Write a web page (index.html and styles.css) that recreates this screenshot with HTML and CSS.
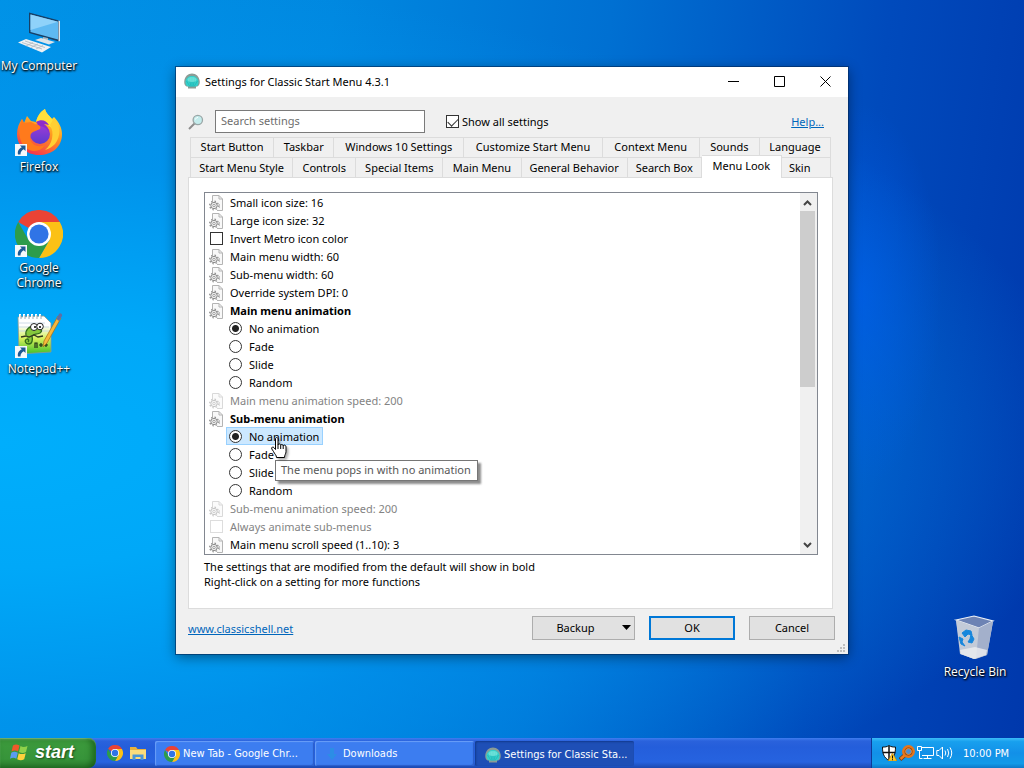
FILE: index.html
```
<!DOCTYPE html>
<html lang="en">

<head>
    <meta charset="UTF-8">
    <title>Settings for Classic Start Menu 4.3.1</title>
    <link rel="stylesheet" href="styles.css">
</head>

<body>
    <!-- shared icons -->
    <svg class="defs" width="0" height="0">
        <symbol id="gearPage" viewBox="0 0 14 16">
            <path d="M3.500 6V.5H10L13.500 4v11.500H8" fill="#f8f8f8" stroke="#b4b4b4" />
            <path d="M10 .5V4h3.500" fill="none" stroke="#b4b4b4" />
            <circle cx="5" cy="10.500" r="3.200" fill="#eee" stroke="#8c8c8c" />
            <circle cx="5" cy="10.500" r="4.300" fill="none" stroke="#8c8c8c" stroke-width="1.300" stroke-dasharray="1.500 1.877" />
            <circle cx="5" cy="10.500" r="1.200" fill="#fff" stroke="#8c8c8c" stroke-width=".8" />
            <path d="M10.500 9v4" stroke="#c4c4c4" />
        </symbol>
        <symbol id="shell" viewBox="0 0 16 16">
            <path d="M4 15.500h8v-2c3 .3 4-2.500 3.700-5.500C15.300 3.500 12 .5 8 .5S.7 3.500.3 8C0 11 1 13.800 4 13.500z" fill="#8b9c96" />
            <path d="M4.500 13.500h7c2.500-.5 3.300-2.700 3-5.300C14 5 11.500 3 8 3S2 5 1.500 8.200c-.3 2.600.5 4.800 3 5.300z" fill="#34cfca" />
            <path d="M8 4v9.500M5 5l2 8.500M11 5L9 13.500M2.500 8L6 13.500M13.500 8L10 13.500" stroke="#1fb0b0" stroke-width=".6" />
            <ellipse cx="8" cy="6.500" rx="4.500" ry="2.500" fill="#8ceee2" opacity=".6" />
        </symbol>
        <symbol id="chrome" viewBox="0 0 48 48">
            <path d="M24 24L3.200 12A24 24 0 0 1 44.800 12z" fill="#ea4335" />
            <path d="M24 24V12h20.800A24 24 0 0 1 24 48L34.400 30z" fill="#fbc116" />
            <path d="M24 24l10.400 6L24 48A24 24 0 0 1 3.200 12L13.600 30z" fill="#2d9c4b" />
            <circle cx="24" cy="24" r="12" fill="#fff" />
            <circle cx="24" cy="24" r="9.600" fill="#3074e6" />
        </symbol>
        <symbol id="shortcut" viewBox="0 0 12 12">
            <path d="M0 0h12v12H0z" fill="#f6f8fb" />
            <path d="M5 1.500h5.500V7L8.700 5.200C6.500 6.500 5.500 8 5.500 10.500H3C2.200 7 4 4.500 6.800 3.300z" fill="#1f5a94" />
        </symbol>
    </svg>

    <div id="desktop">
        <div class="icons left">
            <a href="#" class="icon">
                <svg width="48" height="48" viewBox="0 0 48 48">
                    <path d="M14 4.500L44 12.500V33.500L14 25z" fill="#173f66" />
                    <path d="M15.500 6.500L43 13.800V31.500L15.500 24z" fill="#5eb9f2" />
                    <path d="M15.500 6.500L43 13.800L15.500 22z" fill="#8fd2fa" />
                    <path d="M43.500 12.500l1.500.5v20l-1.500.5z" fill="#dfe7ec" />
                    <path d="M28 29v4l5 1.500V30z" fill="#a9b6bf" />
                    <path d="M20 32l6-2 14 4-6 2.500z" fill="#dde4e8" />
                    <path d="M3 34.500l8-3.500 25 8-9 5.500z" fill="#eef1f4" />
                    <path d="M7 34.500l20 6.500M10 33l20 6.500M11 38l7-3.500M16 39.500l7-3.500M21 41l7-3.500" stroke="#adb7bf" stroke-width=".8" />
                </svg>
                <span>My Computer</span>
            </a>
            <a href="#" class="icon">
                <svg width="48" height="48" viewBox="0 0 48 48">
                    <defs>
                        <linearGradient id="fox" x1=".8" y1="0" x2=".3" y2="1">
                            <stop offset="0" stop-color="#fff04a" />
                            <stop offset=".45" stop-color="#ff9a1f" />
                            <stop offset="1" stop-color="#f5304f" />
                        </linearGradient>
                        <linearGradient id="globe" x1="0" y1="0" x2="0" y2="1">
                            <stop offset="0" stop-color="#a13bd6" />
                            <stop offset="1" stop-color="#5a3bd0" />
                        </linearGradient>
                    </defs>
                    <path d="M30 0c1 5 5 7 7 10l2-2c5 5 8 11 8 17 0 13-10 21-23 21S2 37 2 25c0-6 2-11 5-15l2 4 3-7 4 5 5 1c1-5 4-10 9-13z" fill="url(#fox)" />
                    <path d="M30 0c1 5 5 7 7 10 5 6 7 12 5 20-2-9-7-14-13-15-3-1-6-2-8-2 1-5 4-10 9-13z" fill="#ffe03c" />
                    <circle cx="25" cy="25" r="10" fill="url(#globe)" />
                    <path d="M21 13c5-3 10-2 13 3l-5-1c3 2 5 5 5 9-2-5-6-7-10-7z" fill="#8d2ccb" />
                    <path d="M7 10l2 4 7-1 6 3c3 0 4 2 3 4l-7 3c-2 1-3 3-3 6 1 7 8 10 15 7-4 7-14 8-20 2C3 32 3 18 7 10z" fill="#ff7a1c" />
                    <path d="M39 9c7 8 7 18 1 26-3 3-6 5-10 6 7-5 10-17 5-25z" fill="#ffcf33" />
                    <use href="#shortcut" x="0" y="35" width="12" height="12" />
                </svg>
                <span>Firefox</span>
            </a>
            <a href="#" class="icon">
                <svg width="48" height="48" viewBox="0 0 48 48">
                    <use href="#chrome" width="48" height="48" />
                    <use href="#shortcut" x="0" y="35" width="12" height="12" />
                </svg>
                <span>Google Chrome</span>
            </a>
            <a href="#" class="icon">
                <svg width="48" height="48" viewBox="0 0 48 48">
                    <defs>
                        <linearGradient id="note" x1="0" y1="0" x2="0" y2="1">
                            <stop offset=".25" stop-color="#fff" />
                            <stop offset=".6" stop-color="#d4f05a" />
                            <stop offset="1" stop-color="#3fbf2a" />
                        </linearGradient>
                    </defs>
                    <path d="M3 6l26-1 7 7v29L4 43z" fill="url(#note)" stroke="#8f9a8f" stroke-width=".8" />
                    <path d="M4 12h26M4 16h30M4 20h31" stroke="#c3d3e3" stroke-width=".8" />
                    <path d="M5 8V3M9 8V3M13 8V3M17 8V3M21 8V3M25 8V3" stroke="#fff" stroke-width="2" />
                    <path d="M6 8V4M10 8V4M14 8V4M18 8V4M22 8V4M26 8V4" stroke="#8a97a5" stroke-width=".8" />
                    <path d="M11 24c-1-5 3-9 9-9l3 1c3 1 5 4 2 6-4 2-6 0-8 3 1 4 0 8-3 8-4 0-5-4-2-5 2 0 2 2 1 3" fill="#86c83c" stroke="#2f6a1b" stroke-width="1.300" />
                    <circle cx="19" cy="16" r="3.500" fill="#fff" stroke="#222" />
                    <circle cx="25" cy="15.500" r="3.300" fill="#fff" stroke="#222" />
                    <circle cx="20" cy="16" r="1" />
                    <circle cx="25" cy="16" r="1" />
                    <path d="M6 26l5-1 3 1 5-2 4 2 5-1" fill="none" stroke="#33391f" stroke-width="1.300" />
                    <path d="M20 37v-5h2v5M24 34h4M26 32v4M29 34h4M31 32v4" fill="none" stroke="#1e2c14" stroke-width="1.200" />
                    <path d="M43 5l3 2-14 25-4 4 1-6z" fill="#f6b83c" stroke="#a56a17" stroke-width=".7" />
                    <path d="M41.500 8L44 3c1-2 4 0 3 2l-3 5z" fill="#5d6ea6" />
                    <use href="#shortcut" x="0" y="35" width="12" height="12" />
                </svg>
                <span>Notepad++</span>
            </a>
        </div>

        <div class="window">
            <div class="titlebar">
                <svg width="16" height="16"><use href="#shell" /></svg>
                <span class="title">Settings for Classic Start Menu 4.3.1</span>
                <button type="button" aria-label="Minimize"><svg width="11" height="11"><path d="M0 5.500h11" stroke="#000" /></svg></button>
                <button type="button" aria-label="Maximize"><svg width="11" height="11"><path d="M.5.5h10v10H.5z" fill="none" stroke="#000" /></svg></button>
                <button type="button" aria-label="Close"><svg width="11" height="11"><path d="M.5.5l10 10M10.500.5l-10 10" stroke="#000" /></svg></button>
            </div>

            <div class="content">
                <div class="search">
                    <svg width="16" height="16" viewBox="0 0 16 16">
                        <path d="M1 15l5.500-5.500" stroke="#8d8d8d" stroke-width="2" />
                        <circle cx="9.800" cy="6" r="4.700" fill="#c4ecec" stroke="#9aa6a6" stroke-width="1.300" />
                        <path d="M7.500 5.500c.3-1.300 1.200-2 2.500-2" fill="none" stroke="#fff" />
                    </svg>
                    <input type="text" class="searchBox" placeholder="Search settings" aria-label="Search settings">
                    <label class="showAll"><input type="checkbox" checked>Show all settings</label>
                    <a href="#" class="link help">Help...</a>
                </div>

                <div class="tabs" role="tablist">
                    <div class="tabRow first">
                        <button type="button" class="tab" role="tab">Start Button</button>
                        <button type="button" class="tab" role="tab">Taskbar</button>
                        <button type="button" class="tab" role="tab">Windows 10 Settings</button>
                        <button type="button" class="tab" role="tab">Customize Start Menu</button>
                        <button type="button" class="tab" role="tab">Context Menu</button>
                        <button type="button" class="tab" role="tab">Sounds</button>
                        <button type="button" class="tab" role="tab">Language</button>
                    </div>
                    <div class="tabRow second">
                        <button type="button" class="tab" role="tab">Start Menu Style</button>
                        <button type="button" class="tab" role="tab">Controls</button>
                        <button type="button" class="tab" role="tab">Special Items</button>
                        <button type="button" class="tab" role="tab">Main Menu</button>
                        <button type="button" class="tab" role="tab">General Behavior</button>
                        <button type="button" class="tab" role="tab">Search Box</button>
                        <button type="button" class="tab active" role="tab" aria-selected="true">Menu Look</button>
                        <button type="button" class="tab last" role="tab">Skin</button>
                    </div>
                </div>

                <div class="panel">
                    <div class="listBox">
                        <ul class="list">
                            <li><svg><use href="#gearPage" /></svg>Small icon size: 16</li>
                            <li><svg><use href="#gearPage" /></svg>Large icon size: 32</li>
                            <li><label><input type="checkbox">Invert Metro icon color</label></li>
                            <li><svg><use href="#gearPage" /></svg>Main menu width: 60</li>
                            <li><svg><use href="#gearPage" /></svg>Sub-menu width: 60</li>
                            <li><svg><use href="#gearPage" /></svg>Override system DPI: 0</li>
                            <li class="bold"><svg><use href="#gearPage" /></svg>Main menu animation</li>
                            <li class="sub"><label><input type="radio" name="mainAnim" checked>No animation</label></li>
                            <li class="sub"><label><input type="radio" name="mainAnim">Fade</label></li>
                            <li class="sub"><label><input type="radio" name="mainAnim">Slide</label></li>
                            <li class="sub"><label><input type="radio" name="mainAnim">Random</label></li>
                            <li class="off"><svg><use href="#gearPage" /></svg>Main menu animation speed: 200</li>
                            <li class="bold"><svg><use href="#gearPage" /></svg>Sub-menu animation</li>
                            <li class="sub hover">
                                <label><input type="radio" name="subAnim" checked>No animation</label>
                                <svg class="cursor" viewBox="0 0 16 22">
                                    <path d="M4.500 12.500V2c0-2 2.500-2 2.500 0v6c0-1.500 2.700-1.500 2.700.5 0-1.500 2.500-1.300 2.500.5 0-1.500 2.800-1.200 2.800.8v5c0 2-1.500 3-1.500 5.700H5.500c0-2.500-2-3.500-3-6L.8 12c-.8-2 1.400-2.500 2.200-1.300z" fill="#fff" stroke="#000" />
                                    <path d="M7 8v4M9.700 8.500V12M12.200 9v3" stroke="#000" />
                                </svg>
                                <span class="tooltip" role="tooltip">The menu pops in with no animation</span>
                            </li>
                            <li class="sub"><label><input type="radio" name="subAnim">Fade</label></li>
                            <li class="sub"><label><input type="radio" name="subAnim">Slide</label></li>
                            <li class="sub"><label><input type="radio" name="subAnim">Random</label></li>
                            <li class="off"><svg><use href="#gearPage" /></svg>Sub-menu animation speed: 200</li>
                            <li class="off"><label><input type="checkbox" disabled>Always animate sub-menus</label></li>
                            <li><svg><use href="#gearPage" /></svg>Main menu scroll speed (1..10): 3</li>
                        </ul>
                        <div class="scrollbar">
                            <button type="button" aria-label="Scroll up"><svg width="9" height="6"><path d="M1 5l3.500-3.500L8 5" fill="none" stroke="#444" stroke-width="2" /></svg></button>
                            <div class="track"><div class="thumb"></div></div>
                            <button type="button" aria-label="Scroll down"><svg width="9" height="6"><path d="M1 1l3.500 3.500L8 1" fill="none" stroke="#444" stroke-width="2" /></svg></button>
                        </div>
                    </div>
                    <p class="hint">The settings that are modified from the default will show in bold<br>Right-click on a setting for more functions</p>
                </div>

                <div class="footer">
                    <a href="#" class="link site">www.classicshell.net</a>
                    <button type="button" class="btn backup"><span>Backup</span><svg width="9" height="5"><path d="M0 0h9L4.500 5z" /></svg></button>
                    <button type="button" class="btn ok">OK</button>
                    <button type="button" class="btn">Cancel</button>
                </div>
            </div>
            <svg class="grip" width="8" height="8"><path d="M6 0h2v2H6zM3 3h2v2H3zM6 3h2v2H6zM0 6h2v2H0zM3 6h2v2H3zM6 6h2v2H6z" fill="#bfbfbf" /></svg>
        </div>

        <div class="icons right">
            <a href="#" class="icon">
                <svg width="48" height="48" viewBox="0 0 48 48">
                    <path d="M5 6l37 2-6 33-13 4-13-5z" fill="#b9c6dc" />
                    <path d="M5 6l18-4 19 5-14 7z" fill="#6d83b4" stroke="#edf2f8" stroke-width="1.200" />
                    <path d="M5 6l23 8-3 31-2-.3-14-4.700z" fill="#c3cbd8" />
                    <path d="M28 14l14-7-6 34-11 4z" fill="#a3b0cb" />
                    <path d="M9 36l15-3 12 3-1 5-12 4-13-5z" fill="#eceef0" opacity=".8" />
                    <path d="M11 19l4-3 5 1 1 4-4-1-3 3zM20 20l3 5-2 4-4-1 2-3zM8 23l4 2-1 3 3 4-4-2z" fill="#1686dc" stroke="#1686dc" />
                </svg>
                <span>Recycle Bin</span>
            </a>
        </div>
    </div>

    <div id="taskbar">
        <button type="button" class="start">
            <svg width="20" height="20" viewBox="0 0 20 20">
                <path d="M3 3.500c2-1.300 4-1.300 6.500 0L8 9.500c-2-1.200-4-1.200-6.500 0z" fill="#f0592a" />
                <path d="M10.500 4c2 1.200 4 1.200 7 0L16 10c-2.500 1.300-4.500 1.200-7 0z" fill="#8fd14a" />
                <path d="M1.300 10.700c2-1.300 4-1.300 6.500 0l-1.500 6c-2-1.200-4-1.200-6.300 0z" fill="#5b9cf0" />
                <path d="M8.700 11.200c2 1.200 4 1.200 7 0l-1.500 6c-2.500 1.300-4.500 1.200-7 0z" fill="#ffd23c" />
            </svg>
            start
        </button>
        <div class="quick">
            <a href="#" aria-label="Google Chrome"><svg width="16" height="16"><use href="#chrome" /></svg></a>
            <a href="#" aria-label="File Explorer">
                <svg width="18" height="16" viewBox="0 0 18 16">
                    <path d="M1 2h6l1.500 2H17v10H1z" fill="#e9b23c" />
                    <path d="M1 5h16v9H1z" fill="#fbdc7c" />
                    <path d="M3.500 15V9.500h11V15h-3v-3h-5v3z" fill="#4a96d8" />
                </svg>
            </a>
        </div>
        <div class="tasks">
            <button type="button" class="task"><svg width="16" height="16"><use href="#chrome" /></svg><span>New Tab - Google Chr...</span></button>
            <button type="button" class="task"><svg width="16" height="16" viewBox="0 0 16 16"><path d="M6 2h4v6h3l-5 6-5-6h3z" fill="#2c8de6" /></svg><span>Downloads</span></button>
            <button type="button" class="task current"><svg width="16" height="16"><use href="#shell" /></svg><span>Settings for Classic Sta...</span></button>
        </div>
        <div class="tray">
            <svg width="16" height="16" viewBox="0 0 16 16">
                <path d="M8 .5c2 1.300 4 1.700 6.500 1.500 0 6-1 10.500-6.500 13.500C2.500 12.500 1.500 8 1.500 2 4 2.200 6 1.800 8 .5z" fill="#fff" stroke="#111" />
                <path d="M8 1v14M1.800 7.500h12.400" stroke="#111" stroke-width="1.500" />
                <path d="M11.500 8l4.500 8H7z" fill="#ffc928" stroke="#b97a00" stroke-width=".6" />
                <path d="M11.500 10.500v3M11.500 14.200v1" stroke="#111" />
            </svg>
            <svg width="16" height="16" viewBox="0 0 16 16">
                <path d="M1 14.500l5-4.500" stroke="#7a3c12" stroke-width="4" />
                <path d="M1.500 14L6 10" stroke="#ee7d1c" stroke-width="2.500" />
                <circle cx="9.500" cy="6.500" r="5.200" fill="#7a3c12" stroke="#e8761a" stroke-width="2.500" />
                <circle cx="9.500" cy="6.500" r="3" fill="#4e8fd0" stroke="#f08a2c" />
            </svg>
            <svg width="17" height="16" viewBox="0 0 17 16">
                <path d="M5 2.500h11.500v8H5M10.500 10.500v3M6.500 13.500h8M.5 1.500h4v4h-4zM2.500 5.500v8h3" fill="none" stroke="#fff" />
            </svg>
            <svg width="17" height="16" viewBox="0 0 17 16">
                <path d="M.8 5.500H3L6.500 2v12L3 10.500H.8zM9 5.500q1.500 2.500 0 5M11.500 4q2.500 4 0 8M14 2.500q3.500 5.500 0 11" fill="none" stroke="#fff" />
            </svg>
            <span class="clock">10:00 PM</span>
        </div>
    </div>
</body>

</html>
```
FILE: styles.css
```
* {
    box-sizing: border-box;
}

body,
ul,
p {
    margin: 0;
    padding: 0;
}

ul {
    list-style-type: none;
}

body {
    display: flex;
    flex-direction: column;
    min-height: 100vh;
    font: 11px/15px "Noto Sans", "Open Sans", sans-serif;
    color: #000;
}

button,
input {
    font: inherit;
    color: inherit;
    margin: 0;
    padding: 0;
}

button {
    border: 0;
    background: none;
}

svg {
    flex: none;
}

.defs {
    position: absolute;
}

/* desktop */
#desktop {
    position: relative;
    flex: 1;
    display: flex;
    justify-content: center;
    align-items: flex-start;
    padding-top: 67px;
    background:
        radial-gradient(ellipse 8% 26% at 84% 40%, rgba(0, 96, 240, .6), rgba(0, 90, 240, 0)),
        radial-gradient(ellipse at 0 60%, #00aefc 0, #00a8f8 20%, rgba(0, 150, 240, .6) 45%, rgba(0, 120, 215, 0) 75%),
        linear-gradient(97deg, #0092e6 0, #0088e0 30%, #0070d2 55%, #004abc 80%, #0038ac 100%);
}

.icons {
    position: absolute;
    width: 78px;
}

.icons.left {
    left: 0;
    top: 8px;
}

.icons.right {
    right: 10px;
    bottom: 23px;
}

.icon {
    display: flex;
    flex-direction: column;
    align-items: center;
    gap: 2px;
    min-height: 101px;
    color: #fff;
    font: 12px/15px "Open Sans", "Noto Sans", sans-serif;
    text-align: center;
    text-decoration: none;
    text-shadow: 1px 1px 2px #000, 0 1px 2px #000;
}

/* settings window */
.window {
    position: relative;
    width: 100%;
    max-width: 672px;
    background-color: #f0f0f0;
    box-shadow: 0 0 0 1px rgba(0, 40, 90, .6), 0 3px 12px rgba(0, 0, 0, .45);
}

.titlebar {
    display: flex;
    align-items: center;
    height: 30px;
    padding: 0 0 2px 8px;
    background-color: #fff;
}

.titlebar .title {
    flex: 1;
    padding-left: 5px;
}

.titlebar button {
    display: flex;
    align-items: center;
    justify-content: center;
    width: 46px;
    height: 28px;
}

.content {
    padding: 13px 13px 14px 12px;
}

.search {
    display: flex;
    align-items: center;
    height: 23px;
}

.searchBox {
    width: 210px;
    height: 23px;
    margin: 0 21px 0 11px;
    padding: 0 5px 2px;
    border: 1px solid #7a7a7a;
    background-color: #fff;
}

.searchBox::placeholder {
    color: #6d6d6d;
    opacity: 1;
}

label {
    display: flex;
    align-items: center;
}

.showAll {
    gap: 3px;
}

.link {
    color: #0066bb;
    text-decoration: underline;
}

.help {
    margin: 0 11px 0 auto;
}

input[type=checkbox],
input[type=radio] {
    appearance: none;
    flex: none;
    width: 13px;
    height: 13px;
    border: 1px solid #333;
    background-color: #fff;
}

input[type=radio] {
    border-radius: 50%;
}

input[type=radio]:checked {
    background-image: radial-gradient(circle, #222 3px, transparent 4px);
}

input[type=checkbox]:disabled {
    border-color: #ddd;
}

.showAll input:checked::before {
    content: "";
    display: block;
    width: 9px;
    height: 5px;
    margin: 2px 0 0 1px;
    border: solid #333;
    border-width: 0 0 1px 1px;
    transform: rotate(-45deg);
}

/* tabs */
.tabs {
    padding: 4px 4px 0 2px;
}

.tabRow {
    display: grid;
    height: 20px;
}

.tabRow.first {
    grid-template-columns: 84fr 60fr 130fr 138fr 97fr 60fr 71fr;
}

.tabRow.second {
    grid-template-columns: 103fr 63fr 87fr 78fr 106fr 74fr 80fr 49fr;
}

.tab {
    padding-bottom: 2px;
    border: 1px solid #dcdcdc;
    border-width: 1px 1px 0 0;
    white-space: nowrap;
}

.tab:first-child {
    border-left-width: 1px;
}

.tab.active {
    position: relative;
    height: 23px;
    margin-top: -2px;
    padding-bottom: 4px;
    background-color: #fff;
}

.tab.last {
    padding-left: 7px;
    text-align: left;
}

.panel {
    margin-right: 2px;
    padding: 14px 14px 19px 15px;
    border: 1px solid #dcdcdc;
    background-color: #fff;
}

.listBox {
    display: flex;
    border: 1px solid #828790;
}

.list {
    flex: 1;
    padding: 0 0 1px 4px;
}

.list li {
    display: flex;
    align-items: center;
    height: 18px;
}

.list li > svg {
    width: 14px;
    height: 16px;
    margin: 2px 7px 0 0;
}

.list label {
    gap: 7px;
    height: 18px;
    padding-left: 1px;
}

.list .sub {
    position: relative;
    padding-left: 17px;
}

.list .sub label {
    padding: 0 3px 0 2px;
    border: 1px solid transparent;
}

.list .hover label {
    border-color: #99d1ff;
    background-color: #cce8ff;
}

.bold {
    font-weight: bold;
}

.off {
    color: #838383;
}

.off > svg {
    opacity: .5;
}

.list li .cursor {
    position: absolute;
    z-index: 2;
    left: 62px;
    top: 10px;
    width: 16px;
    height: 22px;
    margin: 0;
    filter: drop-shadow(2px 2px 1px rgba(0, 0, 0, .3));
}

.tooltip {
    position: absolute;
    z-index: 1;
    left: 66px;
    top: 33px;
    padding: 1px 6px 3px 5px;
    border: 1px solid #767676;
    background-color: #fff;
    box-shadow: 3px 3px 2px rgba(0, 0, 0, .45);
    color: #575757;
    white-space: nowrap;
}

.scrollbar {
    display: flex;
    flex-direction: column;
    width: 17px;
    padding: 1px 2px 1px 0;
    background-color: #f0f0f0;
}

.scrollbar button {
    display: flex;
    align-items: center;
    justify-content: center;
    height: 17px;
}

.track {
    flex: 1;
}

.thumb {
    height: 54%;
    background-color: #cdcdcd;
}

.hint {
    padding-top: 4px;
}

/* bottom buttons */
.footer {
    display: flex;
    align-items: center;
    gap: 14px;
    padding-top: 7px;
}

.site {
    margin-right: auto;
}

.btn {
    width: 86px;
    height: 24px;
    padding-bottom: 1px;
    border: 1px solid #adadad;
    background-color: #e1e1e1;
}

.btn.ok {
    border: 2px solid #0078d7;
}

.btn.backup {
    display: flex;
    align-items: center;
    width: 103px;
    padding-right: 3px;
}

.backup span {
    flex: 1;
    padding-right: 4px;
}

.grip {
    position: absolute;
    right: 3px;
    bottom: 2px;
}

/* taskbar */
#taskbar {
    display: flex;
    height: 30px;
    background: linear-gradient(#3f7df0 0, #2a62dc 10%, #245edb 30%, #2663e0 80%, #1c49b0 100%);
    color: #fff;
    font: 11px/15px "DejaVu Sans Condensed", "DejaVu Sans", sans-serif;
}

.start {
    display: flex;
    align-items: center;
    gap: 5px;
    width: 96px;
    padding: 0 0 2px 10px;
    border-radius: 0 8px 8px 0;
    background: linear-gradient(#5aa85a 0, #3c9a3c 12%, #37943a 70%, #2a7a2c 100%);
    box-shadow: inset -4px 0 6px rgba(0, 60, 0, .5), inset 0 1px 1px #8fcf8f;
    font: italic bold 18px/24px "Liberation Sans", sans-serif;
    text-shadow: 1px 1px 2px #1c4a1c;
}

.quick {
    display: flex;
    align-items: center;
    gap: 6px;
    width: 59px;
    padding-left: 11px;
}

.quick svg {
    display: block;
}

.tasks {
    display: flex;
    flex: 1;
    gap: 1px;
    padding: 3px 0 2px;
}

.task {
    display: flex;
    align-items: center;
    gap: 3px;
    flex: 0 1 159px;
    padding: 0 9px;
    border-radius: 2px;
    background-color: #3c7df0;
    box-shadow: inset 1px 1px 1px #6a9ff8, inset -1px -1px 1px #2a5cc8;
    white-space: nowrap;
}

.task.current {
    padding: 2px 0 0 10px;
    background-color: #1e4fb6;
    box-shadow: inset 1px 1px 2px #123a8c;
}

.tray {
    display: flex;
    align-items: center;
    gap: 2px;
    width: 153px;
    padding-left: 9px;
    border-left: 1px solid #0d3a98;
    background: linear-gradient(#3cbcf8 0, #18a0ee 12%, #1290e8 50%, #129ae8 85%, #0e78c8 100%);
}

.clock {
    margin-left: 8px;
    white-space: nowrap;
}
```
